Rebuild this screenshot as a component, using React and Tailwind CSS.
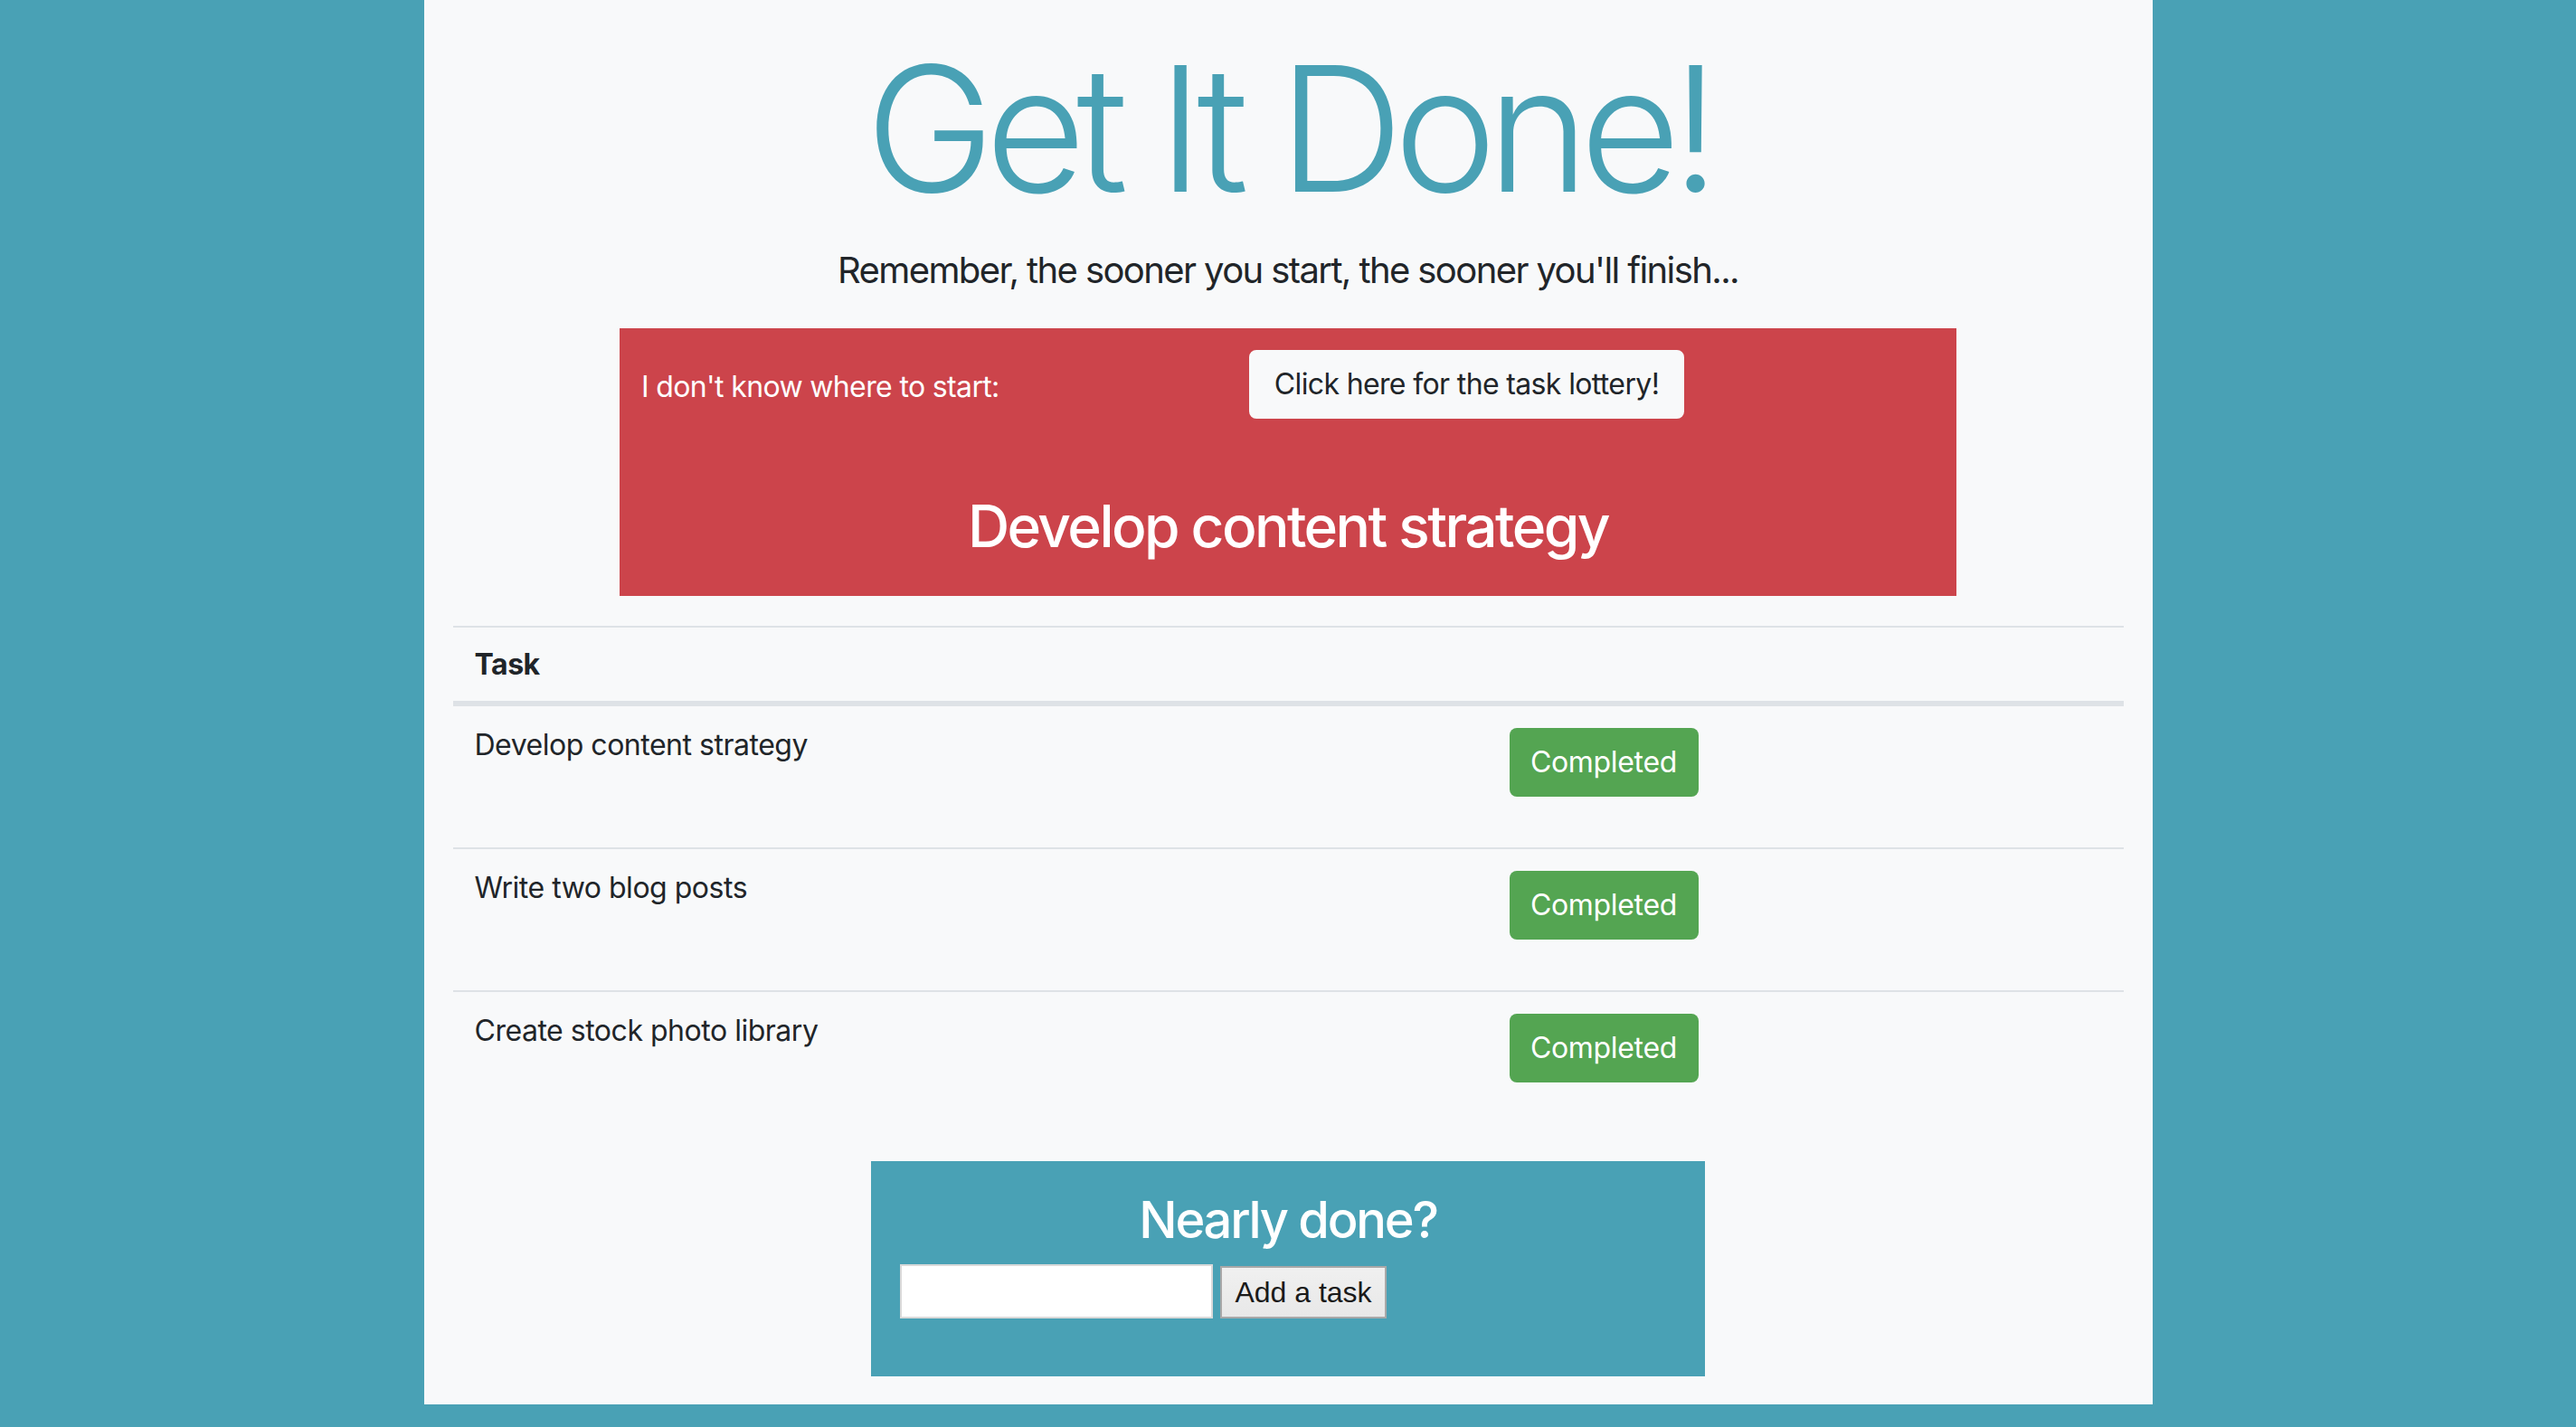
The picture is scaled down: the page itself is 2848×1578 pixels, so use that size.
const TASKS = ['Develop content strategy', 'Write two blog posts', 'Create stock photo library']

function TaskRow({ name }) {
  return (
    <div className="grid grid-cols-[1144px_1fr] border-t-2 border-[#dee2e6] first:border-t-0">
      <div className="px-[24px] pt-[24px] text-[32px] leading-[38px] tracking-[-0.015em] text-[#212529]">{name}</div>
      <div className="px-[24px] pt-[24px] pb-[24px]">
        <button className="mb-[32px] h-[76px] w-[209px] rounded-[8px] bg-[#54a552] text-[32px] leading-[48px] tracking-[-0.01em] text-white">
          Completed
        </button>
      </div>
    </div>
  )
}

export default function App() {
  return (
    <div className="min-h-screen bg-[#49a1b5] font-['Inter',sans-serif]">
      <div className="mx-auto w-[1911px] bg-[#f8f9fa] pb-[31px]">
        <h1 className="pt-[27px] text-center text-[192px] font-light leading-[230px] tracking-[-0.055em] text-[#49a1b5]">
          Get It Done!
        </h1>
        <p className="mt-[12px] text-center text-[40px] leading-[60px] tracking-[-0.04em] text-[#212529]">
          Remember, the sooner you start, the sooner you'll finish...
        </p>

        <div className="mx-auto mt-[34px] w-[1478px] bg-[#cc444b] px-[24px] pt-[24px] pb-[39px]">
          <div className="flex items-start">
            <span className="mt-[17px] w-[672px] text-[32px] leading-[48px] tracking-[-0.02em] text-white">
              I don't know where to start:
            </span>
            <button className="h-[76px] w-[481px] rounded-[8px] border-2 border-[#f8f9fa] bg-[#f8f9fa] text-[32px] leading-[48px] tracking-[-0.02em] text-[#212529]">
              Click here for the task lottery!
            </button>
          </div>
          <h2 className="mt-[80px] text-center text-[64px] font-medium leading-[77px] tracking-[-0.04em] text-white">
            Develop content strategy
          </h2>
        </div>

        <div className="mx-[32px] mt-[33px]">
          <div className="flex h-[87px] items-center border-t-2 border-b-4 border-[#dee2e6] px-[24px]">
            <span className="text-[32px] font-bold leading-[48px] tracking-[-0.015em] text-[#212529]">Task</span>
          </div>
          {TASKS.map((t) => (
            <TaskRow key={t} name={t} />
          ))}
        </div>

        <div className="mx-auto mt-[31px] w-[922px] bg-[#49a1b5] px-[32px] pt-[32px] pb-[64px]">
          <h3 className="text-center text-[56px] font-medium leading-[67px] tracking-[-0.04em] text-white">Nearly done?</h3>
          <div className="mt-[15px] flex items-end gap-[8px] font-['Liberation_Sans',sans-serif]">
            <input type="text" className="h-[60px] w-[346px] border-2 border-[#d9d9d9] bg-white px-[6px] text-[32px]" />
            <button className="h-[58px] w-[184px] border-2 border-[#a8a8a8] bg-gradient-to-b from-[#f0f0f0] to-[#e8e8e8] text-[32px] text-[#1a1a1a]">
              Add a task
            </button>
          </div>
        </div>
      </div>
    </div>
  )
}
